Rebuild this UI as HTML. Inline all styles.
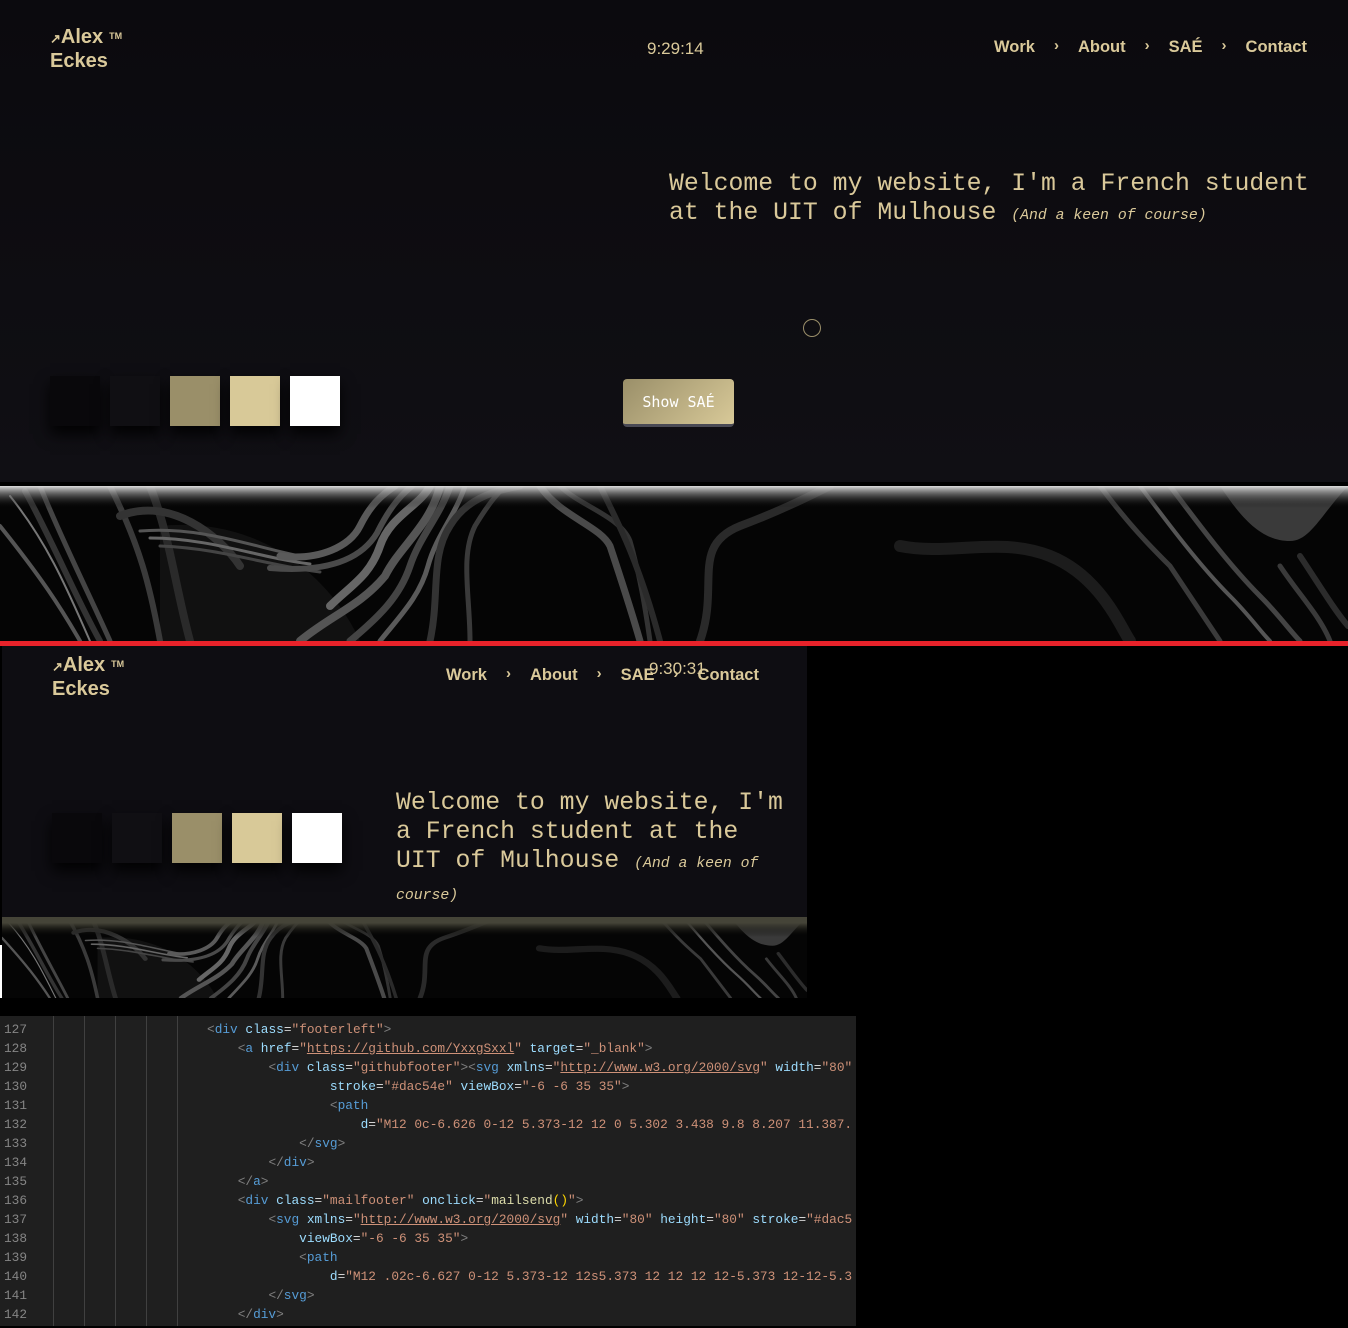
<!DOCTYPE html>
<html><head><meta charset="utf-8"><style>
*{margin:0;padding:0;box-sizing:border-box}
body{width:1348px;height:1328px;background:#000;position:relative;overflow:hidden;font-family:"Liberation Sans",sans-serif}
.abs{position:absolute}
.logo{font-weight:bold;font-size:20px;line-height:23px;color:#dac99a}
.logo sup{font-size:9px;vertical-align:top;position:relative;top:-1px;margin-left:6px}
.nav{font-weight:bold;font-size:16.5px;color:#dac99a;white-space:nowrap}
.nav span.c{display:inline-block;font-weight:bold;font-size:15px;margin:0 19px;position:relative;top:-2px}
.mono{font-family:"Liberation Mono",monospace;color:#dac99a;font-size:24.8px;line-height:29px;white-space:nowrap;font-weight:300}
.mono i{font-size:14.8px}
.sw{position:absolute;width:50px;height:50px;box-shadow:0 8px 14px rgba(0,0,0,.9)}
.code{font-family:"Liberation Mono",monospace;font-size:12.8px;line-height:19px;white-space:pre;color:#d4d4d4}
.ln{color:#858585}
.t{color:#569cd6}.a{color:#9cdcfe}.s{color:#ce9178}.p{color:#808080}.y{color:#dcdcaa}.u{text-decoration:underline;text-decoration-color:#ce9178}
</style></head><body>
<svg width="0" height="0" style="position:absolute">
<defs>
<symbol id="marble" viewBox="0 0 1348 155" preserveAspectRatio="none">
<rect width="1348" height="155" fill="#050505"/>
<path d="M160 40 C260 30 330 90 360 155 L160 155Z" fill="#111"/>
<g fill="none" stroke-linecap="round">
<path d="M0 40 C40 90 60 120 80 155" stroke="#555" stroke-width="4"/>
<path d="M10 10 C50 60 70 110 90 155" stroke="#777" stroke-width="2"/>
<path d="M25 5 C55 60 75 110 100 155" stroke="#333" stroke-width="6"/>
<path d="M40 0 C60 50 90 110 110 155" stroke="#444" stroke-width="5"/>
<path d="M110 0 C140 60 150 100 160 155" stroke="#3a3a3a" stroke-width="6"/>
<path d="M150 0 C170 50 175 100 190 155" stroke="#2a2a2a" stroke-width="8"/>
<path d="M120 30 C170 10 220 50 240 80" stroke="#333" stroke-width="8"/>
<path d="M140 45 C200 40 250 60 300 70" stroke="#555" stroke-width="3"/>
<path d="M150 52 C210 52 260 72 310 78" stroke="#666" stroke-width="3"/>
<path d="M160 60 C220 62 270 80 320 86" stroke="#444" stroke-width="3"/>
<path d="M280 70 C320 75 350 60 360 40 C370 20 380 10 395 0" stroke="#5a5a5a" stroke-width="7"/>
<path d="M270 82 C330 87 362 72 377 47 C387 27 397 12 412 0" stroke="#4a4a4a" stroke-width="6"/>
<path d="M330 120 C350 100 370 90 380 60 C390 30 420 20 430 0" stroke="#666" stroke-width="8"/>
<path d="M300 155 C330 130 360 120 385 90 C400 60 430 40 440 0" stroke="#555" stroke-width="8"/>
<path d="M350 155 C380 130 400 110 410 80 C420 50 440 30 450 0" stroke="#444" stroke-width="7"/>
<path d="M380 155 C400 130 420 110 428 80 C436 50 455 30 465 0" stroke="#5a5a5a" stroke-width="5"/>
<path d="M430 155 C440 110 430 70 450 40 C465 15 490 5 520 0" stroke="#333" stroke-width="7"/>
<path d="M470 155 C470 110 460 70 475 40 C490 15 500 5 505 0" stroke="#3a3a3a" stroke-width="5"/>
<path d="M540 0 C560 30 600 40 610 60 C620 90 630 120 640 155" stroke="#4a4a4a" stroke-width="7"/>
<path d="M560 0 C580 20 620 30 630 55 C640 90 645 120 650 155" stroke="#333" stroke-width="5"/>
<path d="M600 0 C620 40 640 80 660 155" stroke="#2a2a2a" stroke-width="6"/>
<path d="M700 155 C720 100 690 60 740 40 C780 25 810 10 830 0" stroke="#2a2a2a" stroke-width="8"/>
<path d="M900 60 C950 70 1000 50 1050 70 C1100 90 1120 140 1130 155" stroke="#1c1c1c" stroke-width="12"/>
<path d="M1100 0 C1130 40 1150 60 1170 80 C1190 110 1210 140 1220 155" stroke="#3a3a3a" stroke-width="5"/>
<path d="M1140 0 C1170 40 1200 80 1230 110 C1250 130 1260 145 1270 155" stroke="#555" stroke-width="4"/>
<path d="M1170 0 C1200 40 1230 80 1260 110 C1280 130 1290 145 1300 155" stroke="#444" stroke-width="5"/>
<path d="M1280 80 C1300 110 1320 130 1330 155" stroke="#3a3a3a" stroke-width="5"/>
<path d="M1300 70 C1320 100 1335 125 1348 140" stroke="#2c2c2c" stroke-width="6"/>
</g>
<path d="M1220 0 C1240 30 1260 55 1290 55 C1310 55 1320 30 1348 0Z" fill="#3a3a3a"/>
</symbol>
<linearGradient id="tg" x1="0" y1="0" x2="0" y2="1"><stop offset="0" stop-color="#ddd"/><stop offset="1" stop-color="#000" stop-opacity="0"/></linearGradient>
<linearGradient id="tg2" x1="0" y1="0" x2="0" y2="1"><stop offset="0" stop-color="#454438"/><stop offset="1" stop-color="#000" stop-opacity="0"/></linearGradient>
</defs></svg>

<div class="abs" style="left:0;top:0;width:1348px;height:482px;background:linear-gradient(#0b0a0e,#100f14)"></div>
<div class="abs logo" style="left:50px;top:26px"><span style="font-size:13px">↗</span>Alex<sup>TM</sup><br>Eckes</div>
<div class="abs" style="left:647px;top:39px;font-size:17px;color:#dac99a">9:29:14</div>
<div class="abs nav" style="left:994px;top:38px">Work<span class="c">›</span>About<span class="c">›</span>SAÉ<span class="c">›</span>Contact</div>
<div class="abs mono" style="left:669px;top:170px">Welcome to my website, I'm a French student<br>at the UIT of Mulhouse <i>(And a keen of course)</i></div>
<div class="abs" style="left:803px;top:319px;width:18px;height:18px;border:1.5px solid #9a8f6a;border-radius:50%"></div>
<div class="sw" style="left:50px;top:376px;background:#09080b"></div>
<div class="sw" style="left:110px;top:376px;background:#100f13"></div>
<div class="sw" style="left:170px;top:376px;background:#9a8f69"></div>
<div class="sw" style="left:230px;top:376px;background:#d8c998"></div>
<div class="sw" style="left:290px;top:376px;background:#fff"></div>
<div class="abs" style="left:623px;top:379px;width:111px;height:48px;border-radius:4px;background:linear-gradient(135deg,#9a8f69,#d8c998);border-bottom:3px solid #4a4a55;color:#fff;font-family:'DejaVu Sans Mono',monospace;font-size:15px;text-align:center;line-height:46px">Show SAÉ</div>

<div class="abs" style="left:0;top:482px;width:1348px;height:5px;background:#000"></div>
<svg class="abs" style="left:0;top:486px" width="1348" height="155"><use href="#marble"/><rect width="1348" height="22" fill="url(#tg)"/></svg>
<div class="abs" style="left:0;top:641px;width:1348px;height:5px;background:#e8222a"></div>

<div class="abs" style="left:2px;top:646px;width:805px;height:271px;background:#0e0d12"></div>
<div class="abs logo" style="left:52px;top:654px"><span style="font-size:13px">↗</span>Alex<sup>TM</sup><br>Eckes</div>
<div class="abs nav" style="left:446px;top:666px">Work<span class="c">›</span>About<span class="c">›</span>SAE<span class="c">›</span>Contact</div>
<div class="abs" style="left:649px;top:659px;font-size:17px;color:#dac99a">9:30:31</div>
<div class="abs mono" style="left:396px;top:789px">Welcome to my website, I'm<br>a French student at the<br>UIT of Mulhouse <i>(And a keen of</i><br><i>course)</i></div>
<div class="sw" style="left:52px;top:813px;background:#09080b"></div>
<div class="sw" style="left:112px;top:813px;background:#100f13"></div>
<div class="sw" style="left:172px;top:813px;background:#9a8f69"></div>
<div class="sw" style="left:232px;top:813px;background:#d8c998"></div>
<div class="sw" style="left:292px;top:813px;background:#fff"></div>
<svg class="abs" style="left:2px;top:917px" width="805" height="81"><use href="#marble"/><rect width="805" height="6" fill="#454438"/><rect y="6" width="805" height="14" fill="url(#tg2)"/></svg>
<div class="abs" style="left:0;top:945px;width:2px;height:53px;background:#fff"></div>

<div class="abs" style="left:0;top:1016px;width:856px;height:310px;background:#1f1f1f;overflow:hidden">
<div class="abs code" style="left:4px;top:4px"><span class="ln">127
128
129
130
131
132
133
134
135
136
137
138
139
140
141
142</span></div>
<div class="abs code" style="left:53px;top:4px;padding-left:154px"><span class="p">&lt;</span><span class="t">div</span> <span class="a">class</span>=<span class="s">"footerleft"</span><span class="p">&gt;</span>
    <span class="p">&lt;</span><span class="t">a</span> <span class="a">href</span>=<span class="s">"<span class="u">https://github.com/YxxgSxxl</span>"</span> <span class="a">target</span>=<span class="s">"_blank"</span><span class="p">&gt;</span>
        <span class="p">&lt;</span><span class="t">div</span> <span class="a">class</span>=<span class="s">"githubfooter"</span><span class="p">&gt;&lt;</span><span class="t">svg</span> <span class="a">xmlns</span>=<span class="s">"<span class="u">http://www.w3.org/2000/svg</span>"</span> <span class="a">width</span>=<span class="s">"80"</span>
                <span class="a">stroke</span>=<span class="s">"#dac54e"</span> <span class="a">viewBox</span>=<span class="s">"-6 -6 35 35"</span><span class="p">&gt;</span>
                <span class="p">&lt;</span><span class="t">path</span>
                    <span class="a">d</span>=<span class="s">"M12 0c-6.626 0-12 5.373-12 12 0 5.302 3.438 9.8 8.207 11.387.</span>
            <span class="p">&lt;/</span><span class="t">svg</span><span class="p">&gt;</span>
        <span class="p">&lt;/</span><span class="t">div</span><span class="p">&gt;</span>
    <span class="p">&lt;/</span><span class="t">a</span><span class="p">&gt;</span>
    <span class="p">&lt;</span><span class="t">div</span> <span class="a">class</span>=<span class="s">"mailfooter"</span> <span class="a">onclick</span>=<span class="s">"<span class="y">mailsend</span><span style="color:#ffd700">()</span>"</span><span class="p">&gt;</span>
        <span class="p">&lt;</span><span class="t">svg</span> <span class="a">xmlns</span>=<span class="s">"<span class="u">http://www.w3.org/2000/svg</span>"</span> <span class="a">width</span>=<span class="s">"80"</span> <span class="a">height</span>=<span class="s">"80"</span> <span class="a">stroke</span>=<span class="s">"#dac5</span>
            <span class="a">viewBox</span>=<span class="s">"-6 -6 35 35"</span><span class="p">&gt;</span>
            <span class="p">&lt;</span><span class="t">path</span>
                <span class="a">d</span>=<span class="s">"M12 .02c-6.627 0-12 5.373-12 12s5.373 12 12 12 12-5.373 12-12-5.3</span>
        <span class="p">&lt;/</span><span class="t">svg</span><span class="p">&gt;</span>
    <span class="p">&lt;/</span><span class="t">div</span><span class="p">&gt;</span></div>
</div>
<div class="abs" style="left:53px;top:1016px;width:155px;height:310px;background:repeating-linear-gradient(90deg,#404040 0 1px,transparent 1px 31px)"></div>
</body></html>
